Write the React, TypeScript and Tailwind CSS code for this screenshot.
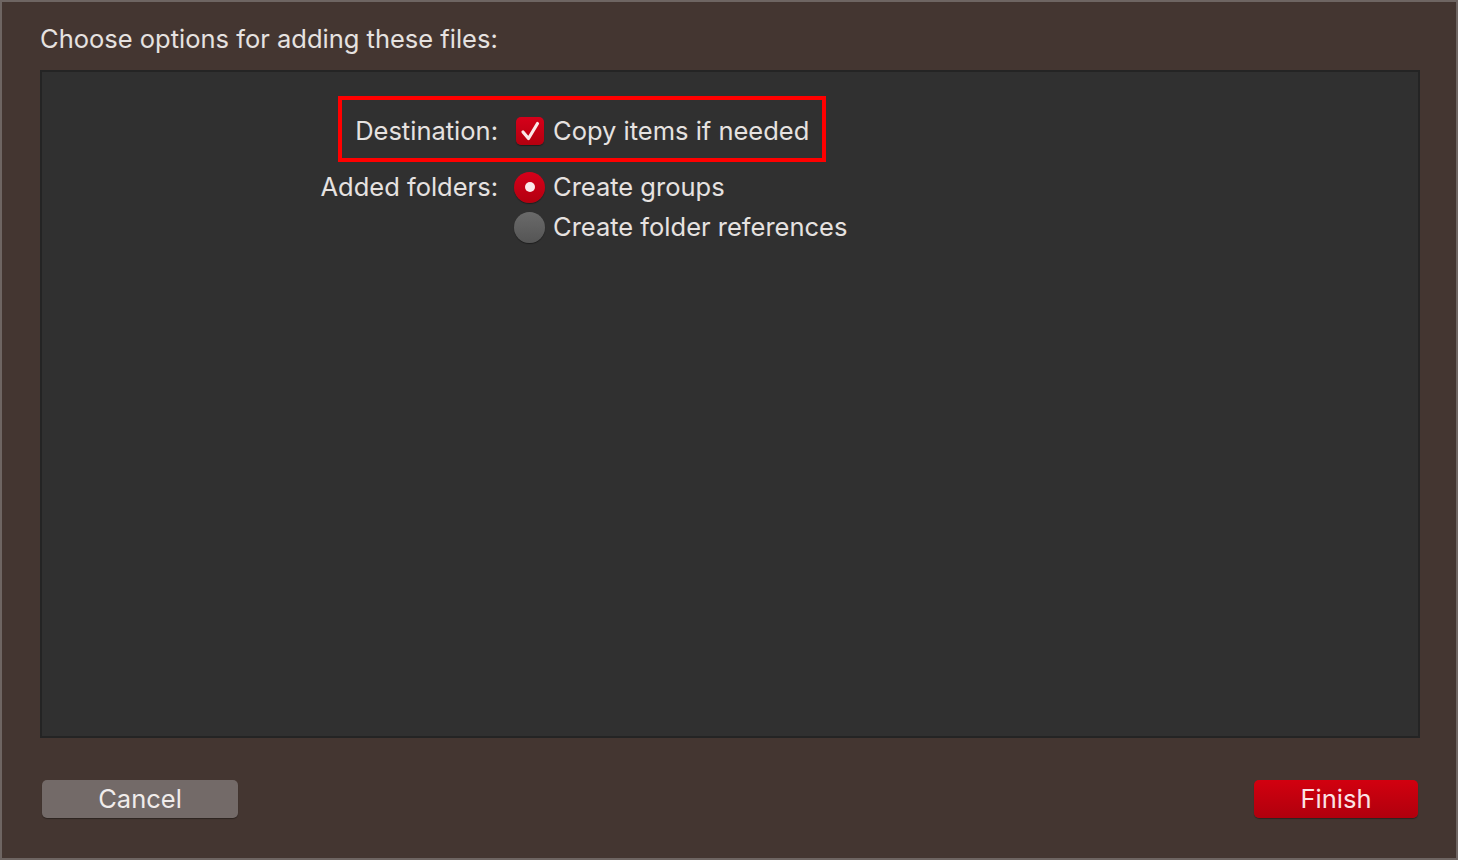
export default function App() {
  return (
    <div
      className="w-[1458px] h-[860px] bg-[#443631] border-2 border-[#6e6562] flex flex-col text-[#e6e2e0]"
      style={{ fontFamily: 'Inter, "Helvetica Neue", Arial, sans-serif' }}
    >
      {/* Title */}
      <div className="h-[68px] pl-[38px] pt-[21px] text-[25.5px] leading-[31px]">
        Choose options for adding these files:
      </div>

      {/* Options panel */}
      <div className="relative ml-[38px] mr-[36px] h-[668px] bg-[#303030] border-2 border-[#242424] pt-[39px]">
        <div className="grid grid-cols-[456px_1fr] gap-x-[16px] text-[25.5px] leading-[40px]">
          <div className="text-right">Destination:</div>
          <div className="flex items-center gap-[9px] pl-[2px]">
            <span className="w-[28px] h-[28px] rounded-[5px] bg-gradient-to-b from-[#d6001a] to-[#b3000f] flex items-center justify-center shadow-[0_1px_1px_rgba(0,0,0,0.4)]">
              <svg width="28" height="28" viewBox="0 0 28 28" fill="none" stroke="#fbe9ea" strokeWidth="3.2" strokeLinecap="round" strokeLinejoin="round">
                <path d="M7 15 L12.5 21.5 L21.5 6.5" />
              </svg>
            </span>
            <span>Copy items if needed</span>
          </div>

          <div className="text-right mt-[16px]">Added folders:</div>
          <div className="flex items-center gap-[8px] mt-[16px]">
            <span className="w-[31px] h-[31px] rounded-full bg-gradient-to-b from-[#d6001a] to-[#b3000f] flex items-center justify-center shadow-[0_1px_1px_rgba(0,0,0,0.4)]">
              <span className="w-[10px] h-[10px] rounded-full bg-[#fbe9ea]" />
            </span>
            <span>Create groups</span>
          </div>

          <div />
          <div className="flex items-center gap-[8px]">
            <span className="w-[31px] h-[31px] rounded-full bg-gradient-to-b from-[#6a6a6a] to-[#555555] shadow-[0_1px_1px_rgba(0,0,0,0.4)]" />
            <span>Create folder references</span>
          </div>
        </div>

        {/* highlight annotation */}
        <div className="absolute left-[296px] top-[24px] w-[488px] h-[66px] border-[4px] border-[#ff0000]" />
      </div>

      {/* Buttons */}
      <div className="flex-1 flex items-start justify-between pl-[40px] pr-[38px] pt-[42px]">
        <button className="w-[196px] h-[38px] rounded-[5px] bg-[#736a68] text-[25.5px] leading-[38px] text-[#f0eceb] shadow-[0_1px_1px_rgba(0,0,0,0.35)]">
          Cancel
        </button>
        <button className="w-[164px] h-[38px] rounded-[5px] bg-gradient-to-b from-[#d2000f] to-[#b0000d] text-[25.5px] leading-[38px] text-[#fbe3e5] shadow-[0_1px_1px_rgba(0,0,0,0.35)]">
          Finish
        </button>
      </div>
    </div>
  )
}
